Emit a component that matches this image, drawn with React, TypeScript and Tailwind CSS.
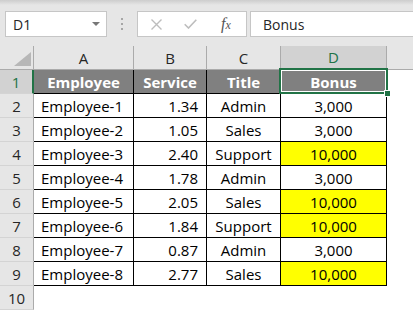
import React from "react";

const rows = [
  ["Employee-1", "1.34", "Admin", "3,000", false],
  ["Employee-2", "1.05", "Sales", "3,000", false],
  ["Employee-3", "2.40", "Support", "10,000", true],
  ["Employee-4", "1.78", "Admin", "3,000", false],
  ["Employee-5", "2.05", "Sales", "10,000", true],
  ["Employee-6", "1.84", "Support", "10,000", true],
  ["Employee-7", "0.87", "Admin", "3,000", false],
  ["Employee-8", "2.77", "Sales", "10,000", true],
] as const;

const font = { fontFamily: '"Open Sans", "Liberation Sans", sans-serif' };

function RowHead({ n, sel }: { n: number; sel?: boolean }) {
  return (
    <div
      className={
        "flex h-[24px] items-center justify-center border-b border-b-[#d4d4d4] pt-[1px] text-[15px] " +
        (sel
          ? "bg-[#d2d2d2] text-[#217346] border-r-2 border-r-[#217346]"
          : "bg-[#e6e6e6] text-[#262626] border-r border-r-[#ababab]")
      }
    >
      {n}
    </div>
  );
}

export default function App() {
  return (
    <div className="h-[310px] w-[413px] overflow-hidden bg-white" style={font}>
      {/* toolbar */}
      <div className="relative h-[46px] bg-[#e6e6e6]">
        <div className="absolute inset-x-0 top-0 h-[5px] bg-gradient-to-b from-[#cdcdcd] to-[#e6e6e6]" />
        <div className="relative flex items-start pt-[11px]">
          <div className="ml-[5px] flex h-[26px] w-[102px] items-center justify-between border border-[#c6c6c6] bg-white pl-[7px] pr-[6px] text-[14px] text-[#262626]">
            <span>D1</span>
            <svg width="8" height="4" viewBox="0 0 8 4">
              <path d="M0 0 H8 L4 4 Z" fill="#777" />
            </svg>
          </div>
          <div className="ml-[14px] mt-[7px] flex w-[2px] flex-col gap-[3px]">
            <div className="h-[2px] w-[2px] bg-[#a6a6a6]" />
            <div className="h-[2px] w-[2px] bg-[#a6a6a6]" />
            <div className="h-[2px] w-[2px] bg-[#a6a6a6]" />
          </div>
          <div className="ml-[14px] flex h-[26px] w-[110px] items-center border border-[#c6c6c6] bg-white">
            <svg className="ml-[13px]" width="11" height="11" viewBox="0 0 11 11">
              <path d="M0.5 0.5 L10.5 10.5 M10.5 0.5 L0.5 10.5" stroke="#bdbdbd" strokeWidth="1.4" />
            </svg>
            <svg className="ml-[22px]" width="13" height="10" viewBox="0 0 13 10">
              <path d="M0.7 5.2 L4.5 9 L12.3 0.8" stroke="#bdbdbd" strokeWidth="1.6" fill="none" />
            </svg>
            <span
              className="ml-[24px] text-[16px] italic leading-none text-[#555]"
              style={{ fontFamily: '"Liberation Serif", serif' }}
            >
              f<span className="text-[12px]">x</span>
            </span>
          </div>
          <div className="ml-[3px] flex h-[26px] flex-1 items-center border border-r-0 border-[#c6c6c6] bg-white pl-[12px] text-[14px] text-[#262626]">
            Bonus
          </div>
        </div>
      </div>

      {/* grid */}
      <div className="relative grid grid-cols-[34px_100px_73px_74px_106px_1fr]">
        {/* column headers */}
        <div className="relative h-[24px] border-b border-r border-[#ababab] bg-[#e6e6e6]">
          <svg className="absolute bottom-[3px] right-[2px]" width="17" height="14" viewBox="0 0 17 14">
            <path d="M17 0 V14 H0 Z" fill="#b7b7b7" />
          </svg>
        </div>
        {["A", "B", "C"].map((c) => (
          <div
            key={c}
            className="flex h-[24px] items-center justify-center border-b border-r border-[#ababab] bg-[#e6e6e6] pt-[1px] text-[15px] text-[#262626]"
          >
            {c}
          </div>
        ))}
        <div className="flex h-[24px] items-center justify-center border-b-2 border-r border-b-[#217346] border-r-[#ababab] bg-[#d2d2d2] pt-[1px] text-[15px] text-[#217346]">
          D
        </div>
        <div className="h-[24px] border-b border-[#ababab] bg-[#e6e6e6]" />

        {/* header row 1 */}
        <RowHead n={1} sel />
        {["Employee", "Service", "Title", "Bonus"].map((h) => (
          <div
            key={h}
            className="flex h-[24px] items-center justify-center border-b border-r border-black bg-[#808080] pt-[2px] text-[15px] font-bold text-white"
          >
            {h}
          </div>
        ))}
        <div className="h-[24px]" />

        {rows.map((r, i) => (
          <React.Fragment key={i}>
            <RowHead n={i + 2} />
            <div className="flex h-[24px] items-center border-b border-r border-black pl-[7px] pt-[2px] text-[15px] text-black">
              {r[0]}
            </div>
            <div className="flex h-[24px] items-center justify-end border-b border-r border-black pr-[8px] pt-[2px] text-[15px] text-black">
              {r[1]}
            </div>
            <div className="flex h-[24px] items-center justify-center border-b border-r border-black pt-[2px] text-[15px] text-black">
              {r[2]}
            </div>
            <div
              className={
                "flex h-[24px] items-center justify-center border-b border-r border-black pt-[2px] text-[15px] text-black " +
                (r[4] ? "bg-[#ffff00]" : "bg-white")
              }
            >
              {r[3]}
            </div>
            <div className="h-[24px]" />
          </React.Fragment>
        ))}

        <RowHead n={10} />
        <div className="col-span-5 h-[24px]" />

        {/* selection overlay on D1 */}
        <div className="pointer-events-none absolute left-[279px] top-[22px] h-[26px] w-[109px] border-2 border-[#217346]">
          <div className="h-full w-full border border-white" />
          <div className="absolute bottom-[-5px] right-[-5px] h-[7px] w-[7px] border border-white bg-[#217346]" />
        </div>
      </div>
    </div>
  );
}
